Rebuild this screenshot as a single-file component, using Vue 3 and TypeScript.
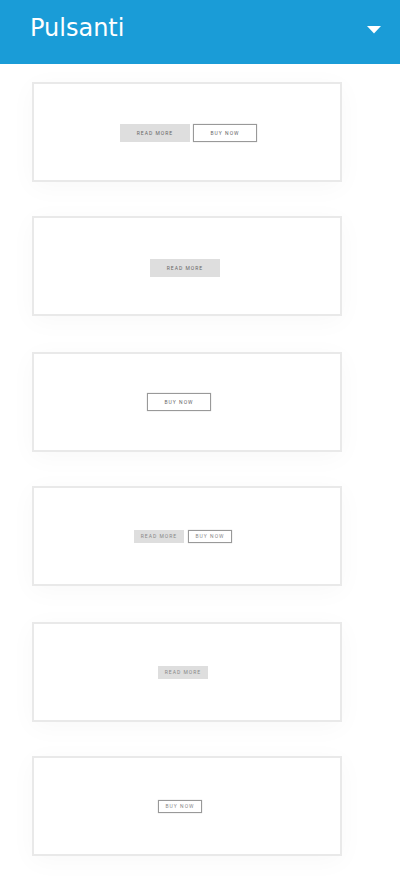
<script setup lang="ts">
import { ref } from 'vue'

type Action = 'read' | 'buy'

interface Snippet {
  id: string
  size: 'large' | 'small'
  actions: Action[]
}

const labels: Record<Action, string> = { read: 'READ MORE', buy: 'BUY NOW' }

const category = ref('Pulsanti')

const snippets: Snippet[] = [
  { id: 'large-pair', size: 'large', actions: ['read', 'buy'] },
  { id: 'large-read', size: 'large', actions: ['read'] },
  { id: 'large-buy', size: 'large', actions: ['buy'] },
  { id: 'small-pair', size: 'small', actions: ['read', 'buy'] },
  { id: 'small-read', size: 'small', actions: ['read'] },
  { id: 'small-buy', size: 'small', actions: ['buy'] },
]
</script>

<template>
  <header class="bar">
    <select v-model="category" class="category" aria-label="Pulsanti">
      <option>Pulsanti</option>
    </select>
    <svg class="caret" viewBox="0 0 14 8" aria-hidden="true">
      <path d="M0 0H14L7 7.5Z" fill="#fff" />
    </svg>
  </header>
  <main class="list">
    <button
      v-for="snippet in snippets"
      :key="snippet.id"
      type="button"
      class="card"
      :class="[snippet.size, snippet.id]"
    >
      <span
        v-for="action in snippet.actions"
        :key="action"
        class="sample"
        :class="action"
      >{{ labels[action] }}</span>
    </button>
  </main>
</template>

<style>
body {
  background: #fff;
}
</style>

<style scoped>
.bar {
  display: grid;
  grid-template-columns: 1fr;
  align-items: center;
  height: 64px;
  background: #1a9cd7;
}

.category {
  grid-area: 1 / 1;
  width: 100%;
  height: 64px;
  margin: 0;
  padding: 0 48px 8px 30px;
  border: 0;
  appearance: none;
  background: transparent;
  color: #fff;
  font: 24px "DejaVu Sans", sans-serif;
  cursor: pointer;
}

.category option {
  color: #333;
}

.caret {
  grid-area: 1 / 1;
  justify-self: end;
  width: 14px;
  height: 8px;
  margin: 0 19px 4px 0;
  pointer-events: none;
}

.list {
  display: flex;
  flex-direction: column;
  padding: 18px 58px 22px 32px;
}

.card {
  display: flex;
  align-items: center;
  gap: 3px;
  box-sizing: border-box;
  height: 100px;
  margin: 0 0 34px;
  padding: 0;
  border: 2px solid #e9e9e9;
  background: #fff;
  box-shadow: 0 5px 25px rgba(0, 0, 0, 0.03);
  font-family: Roboto, sans-serif;
  cursor: pointer;
}

.card:nth-child(even) {
  margin-bottom: 36px;
}

.card:last-child {
  margin-bottom: 0;
}

.card.small {
  gap: 4px;
}

/* Each preview keeps its own inset from the card's edge. */
.large-pair {
  padding: 2px 0 0 86px;
}

.large-read {
  padding: 4px 0 0 116px;
}

.large-buy {
  padding-left: 113px;
}

.small-pair {
  padding-left: 100px;
}

.small-read,
.small-buy {
  padding-left: 124px;
}

.sample {
  display: flex;
  align-items: center;
  justify-content: center;
  box-sizing: border-box;
  width: 64px;
  height: 18px;
  border: 1px solid #999;
  box-shadow: 0 0 1px #bbb;
  color: #666;
  font-size: 5px;
  line-height: 8px;
  letter-spacing: 1px;
  white-space: nowrap;
}

.read {
  width: 70px;
  border-color: #dedede;
  box-shadow: none;
  background: #dedede;
}

.small .sample {
  width: 44px;
  height: 13px;
  color: #888;
}

.small .read {
  width: 50px;
}
</style>
